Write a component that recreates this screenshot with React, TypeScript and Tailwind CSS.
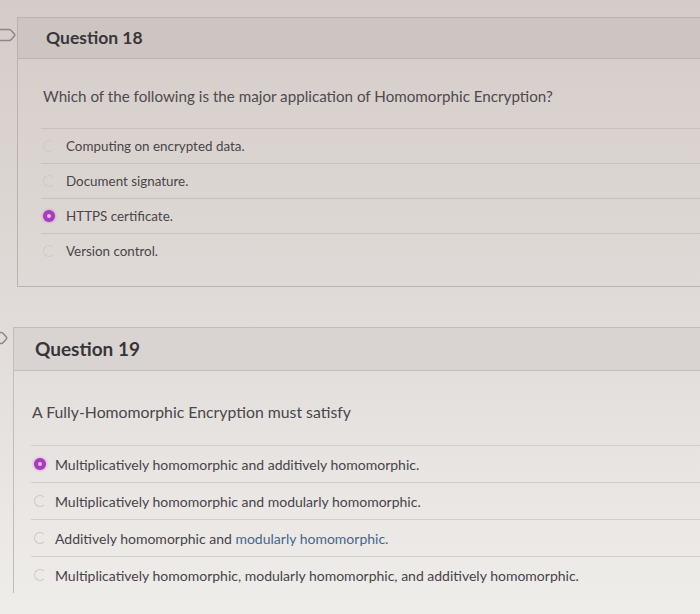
import React from "react";

function Flag({ offset, top }: { offset: number; top: number }) {
  return (
    <div className="relative w-0 h-0">
      <svg
        className="absolute"
        style={{ left: offset, top }}
        width="24"
        height="14"
        viewBox="0 0 24 14"
        fill="none"
      >
        <path
          d="M1 1.5 H17 Q18.5 1.5 19.5 2.8 L22.5 6.2 Q23.2 7 22.5 7.8 L19.5 11.2 Q18.5 12.5 17 12.5 H1"
          stroke="#8d8688"
          strokeWidth="1.4"
          strokeLinejoin="round"
        />
      </svg>
    </div>
  );
}

function Radio({ selected }: { selected?: boolean }) {
  if (selected) {
    return (
      <span className="flex h-[12px] w-[12px] shrink-0 items-center justify-center rounded-full bg-[#a63dbd] shadow-[0_0_3px_rgba(190,60,210,0.6)]">
        <span className="h-[4px] w-[4px] rounded-full bg-[#f3b8f3]" />
      </span>
    );
  }
  return (
    <span className="h-[12px] w-[12px] shrink-0 rounded-full border border-[#cfc9c7] border-r-transparent" />
  );
}

type Ans = { text: React.ReactNode; selected?: boolean };

export default function App() {
  const q18: Ans[] = [
    { text: "Computing on encrypted data." },
    { text: "Document signature." },
    { text: "HTTPS certificate.", selected: true },
    { text: "Version control." },
  ];
  const q19: Ans[] = [
    { text: "Multiplicatively homomorphic and additively homomorphic.", selected: true },
    { text: "Multiplicatively homomorphic and modularly homomorphic." },
    {
      text: (
        <>
          Additively homomorphic and{" "}
          <span className="text-[#46668c]">modularly homomorphic.</span>
        </>
      ),
    },
    { text: "Multiplicatively homomorphic, modularly homomorphic, and additively homomorphic." },
  ];

  return (
    <div
      className="w-[700px] h-[614px] overflow-hidden bg-gradient-to-b from-[#d4ccc9] via-[#e0dbd8] to-[#efedea] text-[#4b4649]"
      style={{ fontFamily: "Lato, 'Open Sans', sans-serif" }}
    >
      {/* Question 18 */}
      <div className="flex pt-[17px]">
        <Flag offset={-8} top={11} />
        <div className="ml-[17px] w-[700px] border-y border-l border-[#bcb3b0]">
          <div className="flex h-[41px] items-center border-b border-[#bcb3b0] bg-[#cdc5c2] pl-[28px]">
            <span className="text-[17.5px] font-bold text-[#3a3638]">Question 18</span>
          </div>
          <div className="pt-[27px] pb-[18px]">
            <p className="pl-[25px] text-[15.2px] leading-[20px] text-[#4f4a4d]">
              Which of the following is the major application of Homomorphic Encryption?
            </p>
            <div className="ml-[23px] mt-[22px]">
              {q18.map((a, i) => (
                <div
                  key={i}
                  className="flex h-[35px] items-center gap-[11px] border-t border-[#c9c1be] pl-[2px] text-[13.4px] text-[#4a4548]"
                >
                  <Radio selected={a.selected} />
                  <span>{a.text}</span>
                </div>
              ))}
            </div>
          </div>
        </div>
      </div>

      {/* Question 19 */}
      <div className="flex pt-[40px]">
        <Flag offset={-16} top={4} />
        <div className="ml-[13px] w-[700px] border-t border-l border-[#c3bcb9]">
          <div className="flex h-[43px] items-center border-b border-[#c3bcb9] bg-[#d9d4d1] pl-[21px]">
            <span className="text-[19px] font-bold text-[#38353a]">Question 19</span>
          </div>
          <div className="pt-[30px]">
            <p className="pl-[18px] text-[15.8px] leading-[22px] text-[#4a4649]">
              A Fully-Homomorphic Encryption must satisfy
            </p>
            <div className="ml-[17px] mt-[22px]">
              {q19.map((a, i) => (
                <div
                  key={i}
                  className="flex h-[37px] items-center gap-[9px] border-t border-[#d3cecb] pl-[3px] text-[14px] text-[#47434a]"
                >
                  <Radio selected={a.selected} />
                  <span>{a.text}</span>
                </div>
              ))}
            </div>
          </div>
        </div>
      </div>
    </div>
  );
}
